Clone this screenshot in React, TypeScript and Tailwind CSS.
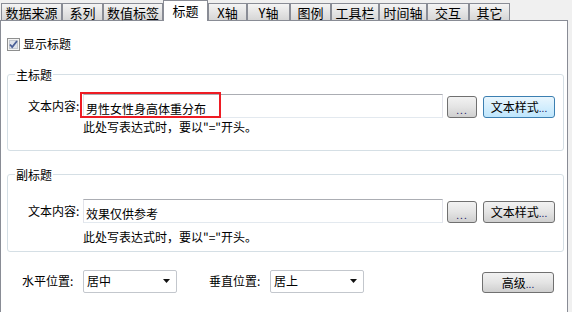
import { FC, ReactNode } from "react";

const tabs = [
  { label: "数据来源", w: 61 },
  { label: "系列", w: 41 },
  { label: "数值标签", w: 60 },
  { label: "标题", w: 45, active: true },
  { label: "X轴", w: 39 },
  { label: "Y轴", w: 43 },
  { label: "图例", w: 41 },
  { label: "工具栏", w: 48 },
  { label: "时间轴", w: 48 },
  { label: "交互", w: 42 },
  { label: "其它", w: 41 },
];

const Btn: FC<{ w: string; hot?: boolean; children: ReactNode }> = ({ w, hot, children }) => (
  <button
    className={
      hot
        ? `${w} h-[22px] rounded-[3px] border border-[#3c7fb1] bg-linear-to-b from-[#eaf6fd] to-[#bee6fd] text-[12px] leading-[20px] text-black`
        : `${w} h-[22px] rounded-[3px] border border-[#707070] bg-linear-to-b from-[#f2f2f2] via-[#e4e4e4] to-[#cfcfcf] text-[12px] leading-[20px] text-black`
    }
  >
    {children}
  </button>
);

const Select: FC<{ value: string }> = ({ value }) => (
  <div className="flex h-[23px] w-[94px] items-center justify-between rounded-[2px] border border-[#c3c7cd] bg-white pl-[3px] pr-[6px]">
    <span className="text-[12px] leading-[14px]">{value}</span>
    <svg width="7" height="4" viewBox="0 0 7 4">
      <path d="M0 0h7L3.5 4z" fill="#111" />
    </svg>
  </div>
);

const Group: FC<{ title: string; text: string; hot?: boolean; hintGap: string; top: string; h: string }> = ({
  title,
  text,
  hot,
  hintGap,
  top,
  h,
}) => (
  <div className={`relative ml-[6px] w-[557px] ${h} rounded-[3px] border border-[#d5dfe5] ${top}`}>
    <span className="absolute -top-[8px] left-[7px] bg-white px-[1px] text-[12px] leading-[16px]">{title}</span>
    <div className="flex items-center pl-[20px]">
      <span className="w-[55px] text-[12px] leading-[14px]">文本内容:</span>
      <div className="relative h-[24px] w-[360px] border border-[#e2e3ea] border-t-[#abadb3] border-b-[#e3e9ef] bg-white pl-[2px]">
        <span className="text-[12px] leading-[22px]">{text}</span>
        {hot && <div className="absolute -left-[4px] -top-[3px] h-[26px] w-[141px] border-2 border-[#ee1c24]" />}
      </div>
      <div className="ml-[4px]">
        <Btn w="w-[30px]">
          <span className="relative top-[2px] text-[10px] tracking-[1px] text-[#1a1a6a]">...</span>
        </Btn>
      </div>
      <div className="ml-[6px]">
        <Btn w="w-[72px]" hot={hot}>
          文本样式<span className="text-[10px] text-[#1a1a6a]">...</span>
        </Btn>
      </div>
    </div>
    <div className={`pl-[75px] text-[12px] leading-[14px] ${hintGap}`}>此处写表达式时，要以"="开头。</div>
  </div>
);

export default function App() {
  return (
    <div
      className="h-[312px] w-[572px] overflow-hidden bg-[#f0f0f0] text-black"
      style={{ fontFamily: '"Noto Sans CJK SC", "Liberation Sans", sans-serif' }}
    >
      <div className="flex h-[20px] items-end pl-[1px]">
        {tabs.map((t) =>
          t.active ? (
            <div
              key={t.label}
              style={{ width: t.w }}
              className="relative z-10 -mb-px flex h-[21px] items-center justify-center border border-b-0 border-[#898c95] bg-white text-[13px]"
            >
              {t.label}
            </div>
          ) : (
            <div
              key={t.label}
              style={{ width: t.w }}
              className="flex h-[17px] items-center justify-center border border-b-0 border-[#898c95] bg-linear-to-b from-[#f4f4f4] to-[#d6d6d6] text-[13px] leading-[15px]"
            >
              {t.label}
            </div>
          )
        )}
      </div>

      <div className="h-[300px] w-[568px] border border-[#898c95] bg-white">
        <div className="mt-[16px] flex items-center pl-[6px]">
          <svg width="13" height="13" viewBox="0 0 13 13">
            <rect x="0.5" y="0.5" width="12" height="12" fill="#f4f4f4" stroke="#8e8f8f" />
            <rect x="2.5" y="2.5" width="8" height="8" fill="#dfe3ea" stroke="#c3c8d0" />
            <path d="M3 6.5l2.2 2.6L10 3" fill="none" stroke="#4a5f97" strokeWidth="1.8" />
          </svg>
          <span className="ml-[3px] text-[12px] leading-[14px]">显示标题</span>
        </div>

        <Group title="主标题" text="男性女性身高体重分布" hot hintGap="mt-[2px]" top="mt-[23px] pt-[18px]" h="h-[77px]" />
        <Group title="副标题" text="效果仅供参考" hintGap="mt-[7px]" top="mt-[23px] pt-[23px]" h="h-[78px]" />

        <div className="mt-[17px] flex items-center pl-[21px] pr-[13px]">
          <span className="w-[61px] text-[12px] leading-[14px]">水平位置:</span>
          <Select value="居中" />
          <span className="ml-[32px] w-[61px] text-[12px] leading-[14px]">垂直位置:</span>
          <Select value="居上" />
          <div className="ml-auto">
            <button className="h-[21px] w-[72px] rounded-[3px] border border-[#707070] bg-linear-to-b from-[#f2f2f2] via-[#e4e4e4] to-[#cfcfcf] text-[12px] leading-[19px]">
              高级<span className="text-[10px] text-[#1a1a6a]">...</span>
            </button>
          </div>
        </div>
      </div>
    </div>
  );
}
